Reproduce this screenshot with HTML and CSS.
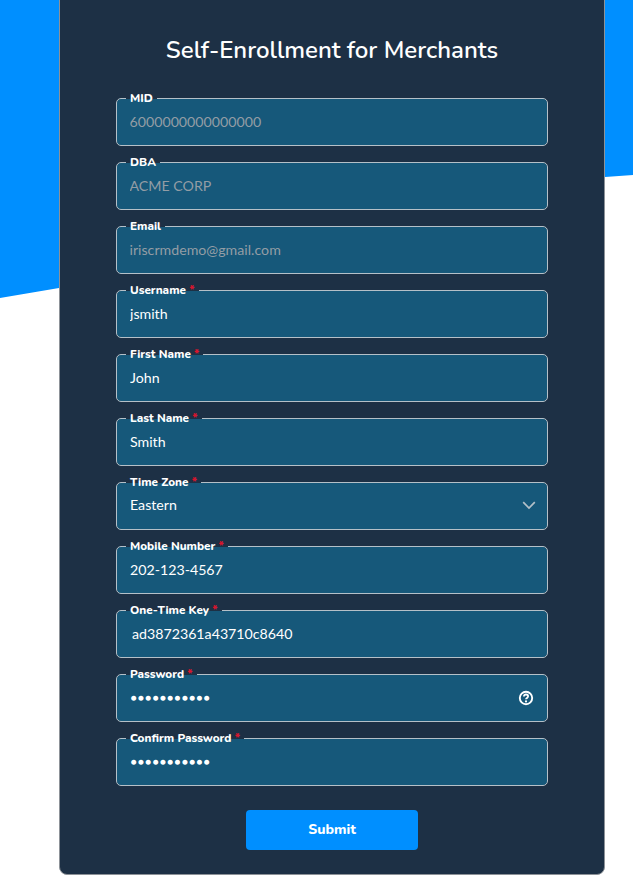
FILE: index.html
```html
<!DOCTYPE html>
<html lang="en">
<head>
<meta charset="utf-8">
<title>Self-Enrollment for Merchants</title>
<link rel="stylesheet" href="styles.css">
</head>
<body>
<div class="backdrop"></div>
<main class="card">
  <h1 class="title">Self-Enrollment for Merchants</h1>
  <form class="form">
    <fieldset class="field"><legend class="label">MID</legend><input class="control muted" value="6000000000000000" readonly></fieldset>
    <fieldset class="field"><legend class="label">DBA</legend><input class="control muted" value="ACME CORP" readonly></fieldset>
    <fieldset class="field"><legend class="label">Email</legend><input class="control muted" value="iriscrmdemo@gmail.com" readonly></fieldset>
    <fieldset class="field"><legend class="label">Username <span class="req">*</span></legend><input class="control" value="jsmith"></fieldset>
    <fieldset class="field"><legend class="label">First Name <span class="req">*</span></legend><input class="control" value="John"></fieldset>
    <fieldset class="field"><legend class="label">Last Name <span class="req">*</span></legend><input class="control" value="Smith"></fieldset>
    <fieldset class="field"><legend class="label">Time Zone <span class="req">*</span></legend>
      <div class="control-row"><select class="control select"><option>Eastern</option></select>
      <svg class="chevron" viewBox="0 0 14 9" aria-hidden="true"><path d="M1.2 1.2 7 7l5.8-5.8" fill="none" stroke="#b4c0c8" stroke-width="1.7"/></svg></div></fieldset>
    <fieldset class="field"><legend class="label">Mobile Number <span class="req">*</span></legend><input class="control" value="202-123-4567"></fieldset>
    <fieldset class="field"><legend class="label">One-Time Key <span class="req">*</span></legend><input class="control key" value="ad3872361a43710c8640"></fieldset>
    <fieldset class="field"><legend class="label">Password <span class="req">*</span></legend>
      <div class="control-row"><input class="control dots" type="password" value="abcdefghijk">
      <svg class="help" viewBox="0 0 16 16" aria-hidden="true"><circle cx="8" cy="8" r="6.2" fill="none" stroke="#fff" stroke-width="1.9"/><path d="M5.9 6.4C5.9 5.2 6.8 4.5 8 4.5s2.1.7 2.1 1.8c0 1.6-2.1 1.6-2.1 3" fill="none" stroke="#fff" stroke-width="1.8"/><circle cx="8" cy="11.4" r="1.1" fill="#fff"/></svg></div></fieldset>
    <fieldset class="field"><legend class="label">Confirm Password <span class="req">*</span></legend><input class="control dots" type="password" value="abcdefghijk"></fieldset>
    <button class="submit" type="button">Submit</button>
  </form>
</main>
</body>
</html>
```
FILE: styles.css
```css
* { box-sizing: border-box; }
html, body { margin: 0; padding: 0; height: 885px; overflow: hidden; background: #fff; }
body { position: relative; font-family: "Nunito", "Noto Sans", sans-serif; }
.backdrop {
  position: absolute; left: 0; top: 0; width: 633px; height: 298px;
  background: #008fff;
  clip-path: polygon(0 0, 633px 0, 633px 175px, 605px 177px, 59px 288px, 0 298px);
}
.card {
  position: relative;
  width: 546px; height: 885px;
  margin: -10px 0 0 59px;
  padding: 43px 56px 0;
  background: #1d3045;
  border: 1px solid #8d9298;
  border-radius: 8px;
}
.title {
  margin: 0 0 24px;
  height: 34px;
  font: 600 24px/32px "Nunito", "Noto Sans", sans-serif;
  color: #fff;
  text-align: center;
}
.form { display: flex; flex-direction: column; gap: 10px; }
.field {
  margin: 0; padding: 0;
  width: 432px; height: 54px;
  background: #16587a;
  background-clip: padding-box;
  border: 1px solid #b5c0c8;
  border-radius: 5px;
}
.label {
  margin-left: 9px; padding: 0 4px;
  font: 800 11.7px/12px "Nunito", "Noto Sans", sans-serif;
  color: #fff;
}
.req { color: #d5162e; }
.control {
  display: block; width: 100%; height: 34px;
  padding: 0 12px 0 13px;
  background: transparent; border: 0; outline: 0;
  font: 14.2px/20px "Lato", sans-serif;
  color: #fff;
}
.muted { color: #939da5; padding-left: 12.5px; }
.key { padding-left: 15px; }
.dots { height: 36px; font: 12.4px/20px "DejaVu Sans", sans-serif; -webkit-text-stroke: 1.4px #fff; }
.select { appearance: none; -webkit-appearance: none; }
.select option { color: #000; }
.control-row { position: relative; }
.chevron { position: absolute; right: 11px; top: 13px; width: 14px; height: 9px; pointer-events: none; }
.help { position: absolute; right: 13px; top: 10px; width: 16px; height: 16px; }
.submit {
  display: block; align-self: center;
  width: 172px; height: 40px; margin-top: 14px;
  background: #008fff; color: #fff; border: 0; border-radius: 4px;
  font: 800 14px/20px "Nunito", "Noto Sans", sans-serif;
}
```
